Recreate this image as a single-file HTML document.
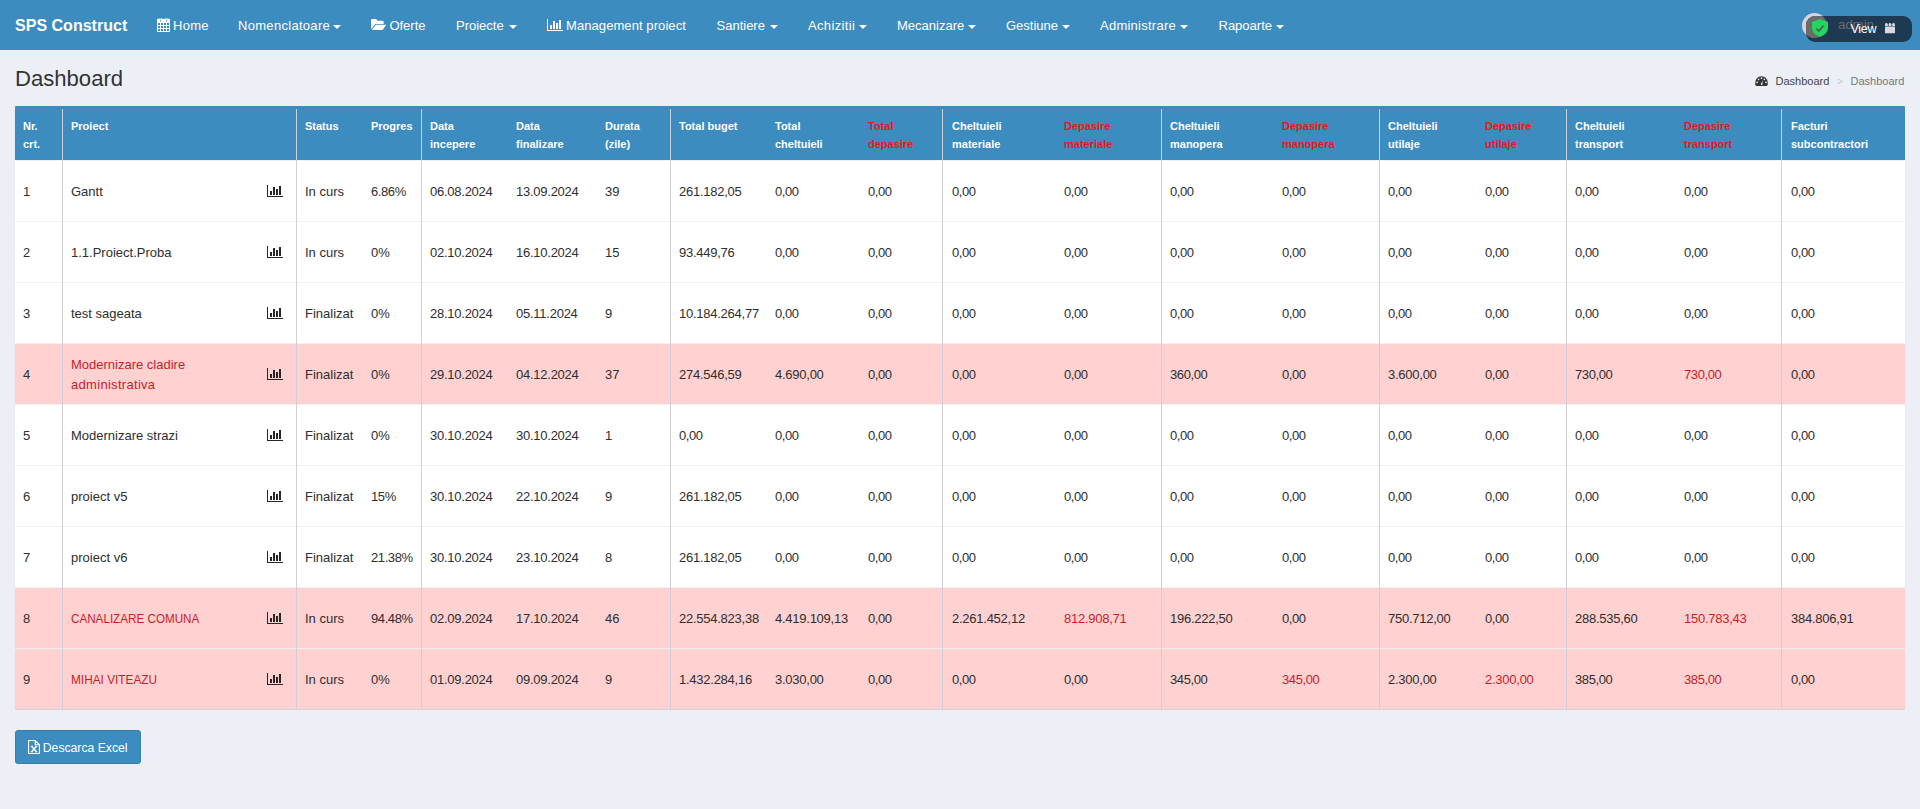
<!DOCTYPE html><html><head><meta charset="utf-8"><title>Dashboard</title><style>
html,body{margin:0;padding:0;}
body{width:1920px;height:809px;overflow:hidden;background:#ecf0f6;font-family:"Liberation Sans", sans-serif;position:relative;color:#2e2e2e;}
.t{position:absolute;white-space:nowrap;}
.ic{position:absolute;}
.nav{position:absolute;left:0;top:0;width:1920px;height:50px;background:#3d8cbf;}
.tbl{position:absolute;left:15px;top:106px;width:1890px;height:603px;background:#fff;border-radius:1px 1px 0 0;box-shadow:0 1px 1px rgba(0,0,0,0.12);overflow:hidden;}
.hd{position:absolute;left:0;top:0;width:1890px;height:54px;background:#3d8cbf;}
.vb{position:absolute;width:1px;background:#cfd0d4;}
.rb{position:absolute;left:0;width:1890px;height:1px;background:#f0f0f0;}
.pk{position:absolute;left:0;width:1890px;height:60px;background:#ffd1d1;}

</style></head><body>
<div class="nav"></div>
<div class="t" style="left:15px;top:15.44px;font-size:16.05px;line-height:20px;font-weight:700;color:#fff;">SPS Construct</div>
<div class="t" style="left:173px;top:15.50px;font-size:13px;line-height:20px;font-weight:400;color:#fff;letter-spacing:0.3px;">Home</div>
<div class="t" style="left:238px;top:15.50px;font-size:13px;line-height:20px;font-weight:400;color:#fff;letter-spacing:0.3px;">Nomenclatoare</div>
<div style="position:absolute;left:333px;top:25px;width:0;height:0;border-left:4px solid transparent;border-right:4px solid transparent;border-top:4px solid #fff;"></div>
<div class="t" style="left:389.4px;top:15.50px;font-size:13px;line-height:20px;font-weight:400;color:#fff;">Oferte</div>
<div class="t" style="left:456px;top:15.50px;font-size:13px;line-height:20px;font-weight:400;color:#fff;">Proiecte</div>
<div style="position:absolute;left:509px;top:25px;width:0;height:0;border-left:4px solid transparent;border-right:4px solid transparent;border-top:4px solid #fff;"></div>
<div class="t" style="left:566px;top:15.50px;font-size:13px;line-height:20px;font-weight:400;color:#fff;letter-spacing:0.08px;">Management proiect</div>
<div class="t" style="left:716.5px;top:15.50px;font-size:13px;line-height:20px;font-weight:400;color:#fff;">Santiere</div>
<div style="position:absolute;left:770px;top:25px;width:0;height:0;border-left:4px solid transparent;border-right:4px solid transparent;border-top:4px solid #fff;"></div>
<div class="t" style="left:808px;top:15.50px;font-size:13px;line-height:20px;font-weight:400;color:#fff;letter-spacing:0.35px;">Achizitii</div>
<div style="position:absolute;left:859px;top:25px;width:0;height:0;border-left:4px solid transparent;border-right:4px solid transparent;border-top:4px solid #fff;"></div>
<div class="t" style="left:897px;top:15.50px;font-size:13px;line-height:20px;font-weight:400;color:#fff;">Mecanizare</div>
<div style="position:absolute;left:968px;top:25px;width:0;height:0;border-left:4px solid transparent;border-right:4px solid transparent;border-top:4px solid #fff;"></div>
<div class="t" style="left:1006px;top:15.50px;font-size:13px;line-height:20px;font-weight:400;color:#fff;">Gestiune</div>
<div style="position:absolute;left:1062px;top:25px;width:0;height:0;border-left:4px solid transparent;border-right:4px solid transparent;border-top:4px solid #fff;"></div>
<div class="t" style="left:1100px;top:15.50px;font-size:13px;line-height:20px;font-weight:400;color:#fff;letter-spacing:0.25px;">Administrare</div>
<div style="position:absolute;left:1180px;top:25px;width:0;height:0;border-left:4px solid transparent;border-right:4px solid transparent;border-top:4px solid #fff;"></div>
<div class="t" style="left:1218.5px;top:15.50px;font-size:13px;line-height:20px;font-weight:400;color:#fff;">Rapoarte</div>
<div style="position:absolute;left:1276px;top:25px;width:0;height:0;border-left:4px solid transparent;border-right:4px solid transparent;border-top:4px solid #fff;"></div>
<svg class="ic" style="left:157px;top:18px" width="13" height="14" viewBox="0 0 13 14"><rect x="0" y="0.5" width="13" height="13.5" rx="0.6" fill="#fff"/><g fill="#3d8cbf" shape-rendering="crispEdges"><rect x="1" y="5" width="2" height="2"/><rect x="1" y="8" width="2" height="2"/><rect x="1" y="11" width="2" height="2"/><rect x="4" y="5" width="2" height="2"/><rect x="4" y="8" width="2" height="2"/><rect x="4" y="11" width="2" height="2"/><rect x="7" y="5" width="2" height="2"/><rect x="7" y="8" width="2" height="2"/><rect x="7" y="11" width="2" height="2"/><rect x="10" y="5" width="2" height="2"/><rect x="10" y="8" width="2" height="2"/><rect x="10" y="11" width="2" height="2"/></g><g fill="#3d8cbf" opacity="0.75"><rect x="3" y="1" width="0.9" height="2.8" rx="0.4"/><rect x="9.2" y="1" width="0.9" height="2.8" rx="0.4"/></g><g fill="#3d8cbf"><rect x="0" y="0" width="2.2" height="0.7"/><rect x="5" y="0" width="3" height="0.7"/><rect x="11" y="0" width="2" height="0.7"/></g></svg>
<svg class="ic" style="left:371px;top:19px" width="16" height="11" viewBox="0 0 16 11"><path fill="#fff" d="M0 1 Q0 0 1 0 H5.2 L6.4 1.7 H11.6 Q12.6 1.7 12.6 2.7 V4.9 H4.2 L0.3 10.2 Z M4.9 5.8 H15.3 L11.6 11 H0.9 Z"/></svg>
<svg class="ic" style="left:547px;top:19px" width="16" height="12" viewBox="0 0 16 12" shape-rendering="crispEdges"><g fill="#fff"><rect x="0" y="0" width="1" height="12"/><rect x="0" y="11" width="16" height="1"/><rect x="3" y="6" width="2" height="4"/><rect x="6" y="2" width="2" height="8"/><rect x="9" y="4" width="2" height="6"/><rect x="12" y="1" width="2" height="9"/></g></svg>
<div style="position:absolute;left:1802px;top:13px;width:25px;height:25px;border-radius:50%;background:#d6d6da;"></div>
<div style="position:absolute;left:1806px;top:16px;width:106px;height:26px;border-radius:9px;background:#1e3a52;overflow:hidden;"><div style="position:absolute;left:-4px;top:-3px;width:25px;height:25px;border-radius:50%;background:#6b6b6b;"></div></div>
<svg class="ic" style="left:1812px;top:19px" width="16" height="18" viewBox="0 0 16 18"><path fill="#22d65e" d="M8 0 L16 3 V9 Q16 15 8 18 Q0 15 0 9 V3 Z"/><path fill="none" stroke="#555" stroke-width="1.6" d="M4.2 9.5 L6.8 12 L11.5 6.5"/></svg>
<div class="t" style="left:1838px;top:15.32px;font-size:13.5px;line-height:20px;font-weight:400;color:#6a6a6a;letter-spacing:-0.2px;">admin</div>
<div class="t" style="left:1850.5px;top:18.63px;font-size:12.6px;line-height:20px;font-weight:400;color:#fff;letter-spacing:-0.35px;">View</div>
<svg class="ic" style="left:1885px;top:22px" width="10" height="12" viewBox="0 0 10 12"><g fill="#d8dce2"><rect x="0" y="4.6" width="10" height="6.6" rx="0.4"/><circle cx="1.4" cy="2.4" r="1.3"/><circle cx="5" cy="2.4" r="1.3"/><circle cx="8.6" cy="2.4" r="1.3"/><rect x="0.1" y="2.4" width="2.6" height="1.6"/><rect x="3.7" y="2.4" width="2.6" height="1.6"/><rect x="7.3" y="2.4" width="2.6" height="1.6"/></g></svg>
<div class="t" style="left:15px;top:63.94px;font-size:22.1px;line-height:30px;font-weight:400;color:#333;">Dashboard</div>
<svg class="ic" style="left:1755px;top:76px" width="13" height="10" viewBox="0 0 13 10"><path fill="#333" d="M0.3 6.4 A6.2 6.2 0 0 1 12.7 6.4 V8.6 Q12.7 10 11.3 10 H1.7 Q0.3 10 0.3 8.6 Z"/><g fill="#f4f4f8"><circle cx="6.5" cy="2.2" r="0.85"/><circle cx="3.6" cy="3.3" r="0.85"/><circle cx="9.4" cy="3.3" r="0.85"/><circle cx="2.1" cy="6.3" r="0.85"/><circle cx="10.9" cy="6.3" r="0.85"/><path d="M5.6 8.8 L7.6 4.2 L7.4 9 Z"/></g></svg>
<div class="t" style="left:1775.5px;top:71.19px;font-size:11px;line-height:20px;font-weight:400;color:#444;">Dashboard</div>
<div class="t" style="left:1837px;top:71.53px;font-size:10px;line-height:20px;font-weight:400;color:#c8c8c8;">&gt;</div>
<div class="t" style="left:1850.5px;top:71.19px;font-size:11px;line-height:20px;font-weight:400;color:#777;">Dashboard</div>
<div class="tbl">
<div class="hd"></div>
<div class="rb" style="top:54px"></div>
<div class="rb" style="top:115px"></div>
<div class="rb" style="top:176px"></div>
<div class="rb" style="top:237px"></div>
<div class="pk" style="top:238px"></div>
<div class="rb" style="top:298px"></div>
<div class="rb" style="top:359px"></div>
<div class="rb" style="top:420px"></div>
<div class="rb" style="top:481px"></div>
<div class="pk" style="top:482px"></div>
<div class="rb" style="top:542px"></div>
<div class="pk" style="top:543px"></div>
<div class="vb" style="left:47px;top:3px;height:600px"></div>
<div class="vb" style="left:281px;top:3px;height:600px"></div>
<div class="vb" style="left:406px;top:3px;height:600px"></div>
<div class="vb" style="left:655px;top:3px;height:600px"></div>
<div class="vb" style="left:927px;top:3px;height:600px"></div>
<div class="vb" style="left:1146px;top:3px;height:600px"></div>
<div class="vb" style="left:1364px;top:3px;height:600px"></div>
<div class="vb" style="left:1551px;top:3px;height:600px"></div>
<div class="vb" style="left:1766px;top:3px;height:600px"></div>
</div>
<div class="t" style="left:23px;top:117.19px;font-size:11px;line-height:18px;font-weight:700;color:#fff;">Nr.</div>
<div class="t" style="left:23px;top:135.19px;font-size:11px;line-height:18px;font-weight:700;color:#fff;">crt.</div>
<div class="t" style="left:71px;top:117.19px;font-size:11px;line-height:18px;font-weight:700;color:#fff;">Proiect</div>
<div class="t" style="left:305px;top:117.19px;font-size:11px;line-height:18px;font-weight:700;color:#fff;">Status</div>
<div class="t" style="left:371px;top:117.19px;font-size:11px;line-height:18px;font-weight:700;color:#fff;">Progres</div>
<div class="t" style="left:430px;top:117.19px;font-size:11px;line-height:18px;font-weight:700;color:#fff;">Data</div>
<div class="t" style="left:430px;top:135.19px;font-size:11px;line-height:18px;font-weight:700;color:#fff;">incepere</div>
<div class="t" style="left:516px;top:117.19px;font-size:11px;line-height:18px;font-weight:700;color:#fff;">Data</div>
<div class="t" style="left:516px;top:135.19px;font-size:11px;line-height:18px;font-weight:700;color:#fff;">finalizare</div>
<div class="t" style="left:605px;top:117.19px;font-size:11px;line-height:18px;font-weight:700;color:#fff;">Durata</div>
<div class="t" style="left:605px;top:135.19px;font-size:11px;line-height:18px;font-weight:700;color:#fff;">(zile)</div>
<div class="t" style="left:679px;top:117.19px;font-size:11px;line-height:18px;font-weight:700;color:#fff;">Total buget</div>
<div class="t" style="left:775px;top:117.19px;font-size:11px;line-height:18px;font-weight:700;color:#fff;">Total</div>
<div class="t" style="left:775px;top:135.19px;font-size:11px;line-height:18px;font-weight:700;color:#fff;">cheltuieli</div>
<div class="t" style="left:868px;top:117.19px;font-size:11px;line-height:18px;font-weight:700;color:#e8161c;">Total</div>
<div class="t" style="left:868px;top:135.19px;font-size:11px;line-height:18px;font-weight:700;color:#e8161c;">depasire</div>
<div class="t" style="left:952px;top:117.19px;font-size:11px;line-height:18px;font-weight:700;color:#fff;">Cheltuieli</div>
<div class="t" style="left:952px;top:135.19px;font-size:11px;line-height:18px;font-weight:700;color:#fff;">materiale</div>
<div class="t" style="left:1064px;top:117.19px;font-size:11px;line-height:18px;font-weight:700;color:#e8161c;">Depasire</div>
<div class="t" style="left:1064px;top:135.19px;font-size:11px;line-height:18px;font-weight:700;color:#e8161c;">materiale</div>
<div class="t" style="left:1170px;top:117.19px;font-size:11px;line-height:18px;font-weight:700;color:#fff;">Cheltuieli</div>
<div class="t" style="left:1170px;top:135.19px;font-size:11px;line-height:18px;font-weight:700;color:#fff;">manopera</div>
<div class="t" style="left:1282px;top:117.19px;font-size:11px;line-height:18px;font-weight:700;color:#e8161c;">Depasire</div>
<div class="t" style="left:1282px;top:135.19px;font-size:11px;line-height:18px;font-weight:700;color:#e8161c;">manopera</div>
<div class="t" style="left:1388px;top:117.19px;font-size:11px;line-height:18px;font-weight:700;color:#fff;">Cheltuieli</div>
<div class="t" style="left:1388px;top:135.19px;font-size:11px;line-height:18px;font-weight:700;color:#fff;">utilaje</div>
<div class="t" style="left:1485px;top:117.19px;font-size:11px;line-height:18px;font-weight:700;color:#e8161c;">Depasire</div>
<div class="t" style="left:1485px;top:135.19px;font-size:11px;line-height:18px;font-weight:700;color:#e8161c;">utilaje</div>
<div class="t" style="left:1575px;top:117.19px;font-size:11px;line-height:18px;font-weight:700;color:#fff;">Cheltuieli</div>
<div class="t" style="left:1575px;top:135.19px;font-size:11px;line-height:18px;font-weight:700;color:#fff;">transport</div>
<div class="t" style="left:1684px;top:117.19px;font-size:11px;line-height:18px;font-weight:700;color:#e8161c;">Depasire</div>
<div class="t" style="left:1684px;top:135.19px;font-size:11px;line-height:18px;font-weight:700;color:#e8161c;">transport</div>
<div class="t" style="left:1791px;top:117.19px;font-size:11px;line-height:18px;font-weight:700;color:#fff;">Facturi</div>
<div class="t" style="left:1791px;top:135.19px;font-size:11px;line-height:18px;font-weight:700;color:#fff;">subcontractori</div>
<div class="t" style="left:23px;top:181.50px;font-size:13px;line-height:20px;font-weight:400;color:#2e2e2e;">1</div>
<div class="t" style="left:71px;top:181.50px;font-size:13px;line-height:20px;font-weight:400;color:#2e2e2e;">Gantt</div>
<div class="t" style="left:305px;top:181.50px;font-size:13px;line-height:20px;font-weight:400;color:#2e2e2e;">In curs</div>
<div class="t" style="left:371px;top:181.50px;font-size:13px;line-height:20px;font-weight:400;color:#2e2e2e;letter-spacing:-0.4px;">6.86%</div>
<div class="t" style="left:430px;top:181.50px;font-size:13px;line-height:20px;font-weight:400;color:#2e2e2e;letter-spacing:-0.25px;">06.08.2024</div>
<div class="t" style="left:516px;top:181.50px;font-size:13px;line-height:20px;font-weight:400;color:#2e2e2e;letter-spacing:-0.25px;">13.09.2024</div>
<div class="t" style="left:605px;top:181.50px;font-size:13px;line-height:20px;font-weight:400;color:#2e2e2e;">39</div>
<div class="t" style="left:679px;top:181.50px;font-size:13px;line-height:20px;font-weight:400;color:#2e2e2e;letter-spacing:-0.25px;">261.182,05</div>
<div class="t" style="left:775px;top:181.50px;font-size:13px;line-height:20px;font-weight:400;color:#2e2e2e;letter-spacing:-0.4px;">0,00</div>
<div class="t" style="left:868px;top:181.50px;font-size:13px;line-height:20px;font-weight:400;color:#2e2e2e;letter-spacing:-0.4px;">0,00</div>
<div class="t" style="left:952px;top:181.50px;font-size:13px;line-height:20px;font-weight:400;color:#2e2e2e;letter-spacing:-0.4px;">0,00</div>
<div class="t" style="left:1064px;top:181.50px;font-size:13px;line-height:20px;font-weight:400;color:#2e2e2e;letter-spacing:-0.4px;">0,00</div>
<div class="t" style="left:1170px;top:181.50px;font-size:13px;line-height:20px;font-weight:400;color:#2e2e2e;letter-spacing:-0.4px;">0,00</div>
<div class="t" style="left:1282px;top:181.50px;font-size:13px;line-height:20px;font-weight:400;color:#2e2e2e;letter-spacing:-0.4px;">0,00</div>
<div class="t" style="left:1388px;top:181.50px;font-size:13px;line-height:20px;font-weight:400;color:#2e2e2e;letter-spacing:-0.4px;">0,00</div>
<div class="t" style="left:1485px;top:181.50px;font-size:13px;line-height:20px;font-weight:400;color:#2e2e2e;letter-spacing:-0.4px;">0,00</div>
<div class="t" style="left:1575px;top:181.50px;font-size:13px;line-height:20px;font-weight:400;color:#2e2e2e;letter-spacing:-0.4px;">0,00</div>
<div class="t" style="left:1684px;top:181.50px;font-size:13px;line-height:20px;font-weight:400;color:#2e2e2e;letter-spacing:-0.4px;">0,00</div>
<div class="t" style="left:1791px;top:181.50px;font-size:13px;line-height:20px;font-weight:400;color:#2e2e2e;letter-spacing:-0.4px;">0,00</div>
<svg class="ic" style="left:267px;top:185px" width="16" height="12" viewBox="0 0 16 12" shape-rendering="crispEdges"><g fill="#262626"><rect x="0" y="0" width="1" height="12"/><rect x="0" y="11" width="16" height="1"/><rect x="3" y="6" width="2" height="4"/><rect x="6" y="2" width="2" height="8"/><rect x="9" y="4" width="2" height="6"/><rect x="12" y="1" width="2" height="9"/></g></svg>
<div class="t" style="left:23px;top:242.50px;font-size:13px;line-height:20px;font-weight:400;color:#2e2e2e;">2</div>
<div class="t" style="left:71px;top:242.50px;font-size:13px;line-height:20px;font-weight:400;color:#2e2e2e;">1.1.Proiect.Proba</div>
<div class="t" style="left:305px;top:242.50px;font-size:13px;line-height:20px;font-weight:400;color:#2e2e2e;">In curs</div>
<div class="t" style="left:371px;top:242.50px;font-size:13px;line-height:20px;font-weight:400;color:#2e2e2e;">0%</div>
<div class="t" style="left:430px;top:242.50px;font-size:13px;line-height:20px;font-weight:400;color:#2e2e2e;letter-spacing:-0.25px;">02.10.2024</div>
<div class="t" style="left:516px;top:242.50px;font-size:13px;line-height:20px;font-weight:400;color:#2e2e2e;letter-spacing:-0.25px;">16.10.2024</div>
<div class="t" style="left:605px;top:242.50px;font-size:13px;line-height:20px;font-weight:400;color:#2e2e2e;">15</div>
<div class="t" style="left:679px;top:242.50px;font-size:13px;line-height:20px;font-weight:400;color:#2e2e2e;letter-spacing:-0.25px;">93.449,76</div>
<div class="t" style="left:775px;top:242.50px;font-size:13px;line-height:20px;font-weight:400;color:#2e2e2e;letter-spacing:-0.4px;">0,00</div>
<div class="t" style="left:868px;top:242.50px;font-size:13px;line-height:20px;font-weight:400;color:#2e2e2e;letter-spacing:-0.4px;">0,00</div>
<div class="t" style="left:952px;top:242.50px;font-size:13px;line-height:20px;font-weight:400;color:#2e2e2e;letter-spacing:-0.4px;">0,00</div>
<div class="t" style="left:1064px;top:242.50px;font-size:13px;line-height:20px;font-weight:400;color:#2e2e2e;letter-spacing:-0.4px;">0,00</div>
<div class="t" style="left:1170px;top:242.50px;font-size:13px;line-height:20px;font-weight:400;color:#2e2e2e;letter-spacing:-0.4px;">0,00</div>
<div class="t" style="left:1282px;top:242.50px;font-size:13px;line-height:20px;font-weight:400;color:#2e2e2e;letter-spacing:-0.4px;">0,00</div>
<div class="t" style="left:1388px;top:242.50px;font-size:13px;line-height:20px;font-weight:400;color:#2e2e2e;letter-spacing:-0.4px;">0,00</div>
<div class="t" style="left:1485px;top:242.50px;font-size:13px;line-height:20px;font-weight:400;color:#2e2e2e;letter-spacing:-0.4px;">0,00</div>
<div class="t" style="left:1575px;top:242.50px;font-size:13px;line-height:20px;font-weight:400;color:#2e2e2e;letter-spacing:-0.4px;">0,00</div>
<div class="t" style="left:1684px;top:242.50px;font-size:13px;line-height:20px;font-weight:400;color:#2e2e2e;letter-spacing:-0.4px;">0,00</div>
<div class="t" style="left:1791px;top:242.50px;font-size:13px;line-height:20px;font-weight:400;color:#2e2e2e;letter-spacing:-0.4px;">0,00</div>
<svg class="ic" style="left:267px;top:246px" width="16" height="12" viewBox="0 0 16 12" shape-rendering="crispEdges"><g fill="#262626"><rect x="0" y="0" width="1" height="12"/><rect x="0" y="11" width="16" height="1"/><rect x="3" y="6" width="2" height="4"/><rect x="6" y="2" width="2" height="8"/><rect x="9" y="4" width="2" height="6"/><rect x="12" y="1" width="2" height="9"/></g></svg>
<div class="t" style="left:23px;top:303.50px;font-size:13px;line-height:20px;font-weight:400;color:#2e2e2e;">3</div>
<div class="t" style="left:71px;top:303.50px;font-size:13px;line-height:20px;font-weight:400;color:#2e2e2e;">test sageata</div>
<div class="t" style="left:305px;top:303.50px;font-size:13px;line-height:20px;font-weight:400;color:#2e2e2e;">Finalizat</div>
<div class="t" style="left:371px;top:303.50px;font-size:13px;line-height:20px;font-weight:400;color:#2e2e2e;">0%</div>
<div class="t" style="left:430px;top:303.50px;font-size:13px;line-height:20px;font-weight:400;color:#2e2e2e;letter-spacing:-0.25px;">28.10.2024</div>
<div class="t" style="left:516px;top:303.50px;font-size:13px;line-height:20px;font-weight:400;color:#2e2e2e;letter-spacing:-0.25px;">05.11.2024</div>
<div class="t" style="left:605px;top:303.50px;font-size:13px;line-height:20px;font-weight:400;color:#2e2e2e;">9</div>
<div class="t" style="left:679px;top:303.50px;font-size:13px;line-height:20px;font-weight:400;color:#2e2e2e;letter-spacing:-0.25px;">10.184.264,77</div>
<div class="t" style="left:775px;top:303.50px;font-size:13px;line-height:20px;font-weight:400;color:#2e2e2e;letter-spacing:-0.4px;">0,00</div>
<div class="t" style="left:868px;top:303.50px;font-size:13px;line-height:20px;font-weight:400;color:#2e2e2e;letter-spacing:-0.4px;">0,00</div>
<div class="t" style="left:952px;top:303.50px;font-size:13px;line-height:20px;font-weight:400;color:#2e2e2e;letter-spacing:-0.4px;">0,00</div>
<div class="t" style="left:1064px;top:303.50px;font-size:13px;line-height:20px;font-weight:400;color:#2e2e2e;letter-spacing:-0.4px;">0,00</div>
<div class="t" style="left:1170px;top:303.50px;font-size:13px;line-height:20px;font-weight:400;color:#2e2e2e;letter-spacing:-0.4px;">0,00</div>
<div class="t" style="left:1282px;top:303.50px;font-size:13px;line-height:20px;font-weight:400;color:#2e2e2e;letter-spacing:-0.4px;">0,00</div>
<div class="t" style="left:1388px;top:303.50px;font-size:13px;line-height:20px;font-weight:400;color:#2e2e2e;letter-spacing:-0.4px;">0,00</div>
<div class="t" style="left:1485px;top:303.50px;font-size:13px;line-height:20px;font-weight:400;color:#2e2e2e;letter-spacing:-0.4px;">0,00</div>
<div class="t" style="left:1575px;top:303.50px;font-size:13px;line-height:20px;font-weight:400;color:#2e2e2e;letter-spacing:-0.4px;">0,00</div>
<div class="t" style="left:1684px;top:303.50px;font-size:13px;line-height:20px;font-weight:400;color:#2e2e2e;letter-spacing:-0.4px;">0,00</div>
<div class="t" style="left:1791px;top:303.50px;font-size:13px;line-height:20px;font-weight:400;color:#2e2e2e;letter-spacing:-0.4px;">0,00</div>
<svg class="ic" style="left:267px;top:307px" width="16" height="12" viewBox="0 0 16 12" shape-rendering="crispEdges"><g fill="#262626"><rect x="0" y="0" width="1" height="12"/><rect x="0" y="11" width="16" height="1"/><rect x="3" y="6" width="2" height="4"/><rect x="6" y="2" width="2" height="8"/><rect x="9" y="4" width="2" height="6"/><rect x="12" y="1" width="2" height="9"/></g></svg>
<div class="t" style="left:23px;top:364.50px;font-size:13px;line-height:20px;font-weight:400;color:#2e2e2e;">4</div>
<div class="t" style="left:71px;top:354.50px;font-size:13px;line-height:20px;font-weight:400;color:#ca1d28;">Modernizare cladire</div>
<div class="t" style="left:71px;top:374.50px;font-size:13px;line-height:20px;font-weight:400;color:#ca1d28;letter-spacing:0.3px;">administrativa</div>
<div class="t" style="left:305px;top:364.50px;font-size:13px;line-height:20px;font-weight:400;color:#2e2e2e;">Finalizat</div>
<div class="t" style="left:371px;top:364.50px;font-size:13px;line-height:20px;font-weight:400;color:#2e2e2e;">0%</div>
<div class="t" style="left:430px;top:364.50px;font-size:13px;line-height:20px;font-weight:400;color:#2e2e2e;letter-spacing:-0.25px;">29.10.2024</div>
<div class="t" style="left:516px;top:364.50px;font-size:13px;line-height:20px;font-weight:400;color:#2e2e2e;letter-spacing:-0.25px;">04.12.2024</div>
<div class="t" style="left:605px;top:364.50px;font-size:13px;line-height:20px;font-weight:400;color:#2e2e2e;">37</div>
<div class="t" style="left:679px;top:364.50px;font-size:13px;line-height:20px;font-weight:400;color:#2e2e2e;letter-spacing:-0.25px;">274.546,59</div>
<div class="t" style="left:775px;top:364.50px;font-size:13px;line-height:20px;font-weight:400;color:#2e2e2e;letter-spacing:-0.25px;">4.690,00</div>
<div class="t" style="left:868px;top:364.50px;font-size:13px;line-height:20px;font-weight:400;color:#2e2e2e;letter-spacing:-0.4px;">0,00</div>
<div class="t" style="left:952px;top:364.50px;font-size:13px;line-height:20px;font-weight:400;color:#2e2e2e;letter-spacing:-0.4px;">0,00</div>
<div class="t" style="left:1064px;top:364.50px;font-size:13px;line-height:20px;font-weight:400;color:#2e2e2e;letter-spacing:-0.4px;">0,00</div>
<div class="t" style="left:1170px;top:364.50px;font-size:13px;line-height:20px;font-weight:400;color:#2e2e2e;letter-spacing:-0.4px;">360,00</div>
<div class="t" style="left:1282px;top:364.50px;font-size:13px;line-height:20px;font-weight:400;color:#2e2e2e;letter-spacing:-0.4px;">0,00</div>
<div class="t" style="left:1388px;top:364.50px;font-size:13px;line-height:20px;font-weight:400;color:#2e2e2e;letter-spacing:-0.25px;">3.600,00</div>
<div class="t" style="left:1485px;top:364.50px;font-size:13px;line-height:20px;font-weight:400;color:#2e2e2e;letter-spacing:-0.4px;">0,00</div>
<div class="t" style="left:1575px;top:364.50px;font-size:13px;line-height:20px;font-weight:400;color:#2e2e2e;letter-spacing:-0.4px;">730,00</div>
<div class="t" style="left:1684px;top:364.50px;font-size:13px;line-height:20px;font-weight:400;color:#ca1d28;letter-spacing:-0.4px;">730,00</div>
<div class="t" style="left:1791px;top:364.50px;font-size:13px;line-height:20px;font-weight:400;color:#2e2e2e;letter-spacing:-0.4px;">0,00</div>
<svg class="ic" style="left:267px;top:368px" width="16" height="12" viewBox="0 0 16 12" shape-rendering="crispEdges"><g fill="#262626"><rect x="0" y="0" width="1" height="12"/><rect x="0" y="11" width="16" height="1"/><rect x="3" y="6" width="2" height="4"/><rect x="6" y="2" width="2" height="8"/><rect x="9" y="4" width="2" height="6"/><rect x="12" y="1" width="2" height="9"/></g></svg>
<div class="t" style="left:23px;top:425.50px;font-size:13px;line-height:20px;font-weight:400;color:#2e2e2e;">5</div>
<div class="t" style="left:71px;top:425.50px;font-size:13px;line-height:20px;font-weight:400;color:#2e2e2e;">Modernizare strazi</div>
<div class="t" style="left:305px;top:425.50px;font-size:13px;line-height:20px;font-weight:400;color:#2e2e2e;">Finalizat</div>
<div class="t" style="left:371px;top:425.50px;font-size:13px;line-height:20px;font-weight:400;color:#2e2e2e;">0%</div>
<div class="t" style="left:430px;top:425.50px;font-size:13px;line-height:20px;font-weight:400;color:#2e2e2e;letter-spacing:-0.25px;">30.10.2024</div>
<div class="t" style="left:516px;top:425.50px;font-size:13px;line-height:20px;font-weight:400;color:#2e2e2e;letter-spacing:-0.25px;">30.10.2024</div>
<div class="t" style="left:605px;top:425.50px;font-size:13px;line-height:20px;font-weight:400;color:#2e2e2e;">1</div>
<div class="t" style="left:679px;top:425.50px;font-size:13px;line-height:20px;font-weight:400;color:#2e2e2e;letter-spacing:-0.4px;">0,00</div>
<div class="t" style="left:775px;top:425.50px;font-size:13px;line-height:20px;font-weight:400;color:#2e2e2e;letter-spacing:-0.4px;">0,00</div>
<div class="t" style="left:868px;top:425.50px;font-size:13px;line-height:20px;font-weight:400;color:#2e2e2e;letter-spacing:-0.4px;">0,00</div>
<div class="t" style="left:952px;top:425.50px;font-size:13px;line-height:20px;font-weight:400;color:#2e2e2e;letter-spacing:-0.4px;">0,00</div>
<div class="t" style="left:1064px;top:425.50px;font-size:13px;line-height:20px;font-weight:400;color:#2e2e2e;letter-spacing:-0.4px;">0,00</div>
<div class="t" style="left:1170px;top:425.50px;font-size:13px;line-height:20px;font-weight:400;color:#2e2e2e;letter-spacing:-0.4px;">0,00</div>
<div class="t" style="left:1282px;top:425.50px;font-size:13px;line-height:20px;font-weight:400;color:#2e2e2e;letter-spacing:-0.4px;">0,00</div>
<div class="t" style="left:1388px;top:425.50px;font-size:13px;line-height:20px;font-weight:400;color:#2e2e2e;letter-spacing:-0.4px;">0,00</div>
<div class="t" style="left:1485px;top:425.50px;font-size:13px;line-height:20px;font-weight:400;color:#2e2e2e;letter-spacing:-0.4px;">0,00</div>
<div class="t" style="left:1575px;top:425.50px;font-size:13px;line-height:20px;font-weight:400;color:#2e2e2e;letter-spacing:-0.4px;">0,00</div>
<div class="t" style="left:1684px;top:425.50px;font-size:13px;line-height:20px;font-weight:400;color:#2e2e2e;letter-spacing:-0.4px;">0,00</div>
<div class="t" style="left:1791px;top:425.50px;font-size:13px;line-height:20px;font-weight:400;color:#2e2e2e;letter-spacing:-0.4px;">0,00</div>
<svg class="ic" style="left:267px;top:429px" width="16" height="12" viewBox="0 0 16 12" shape-rendering="crispEdges"><g fill="#262626"><rect x="0" y="0" width="1" height="12"/><rect x="0" y="11" width="16" height="1"/><rect x="3" y="6" width="2" height="4"/><rect x="6" y="2" width="2" height="8"/><rect x="9" y="4" width="2" height="6"/><rect x="12" y="1" width="2" height="9"/></g></svg>
<div class="t" style="left:23px;top:486.50px;font-size:13px;line-height:20px;font-weight:400;color:#2e2e2e;">6</div>
<div class="t" style="left:71px;top:486.50px;font-size:13px;line-height:20px;font-weight:400;color:#2e2e2e;">proiect v5</div>
<div class="t" style="left:305px;top:486.50px;font-size:13px;line-height:20px;font-weight:400;color:#2e2e2e;">Finalizat</div>
<div class="t" style="left:371px;top:486.50px;font-size:13px;line-height:20px;font-weight:400;color:#2e2e2e;letter-spacing:-0.4px;">15%</div>
<div class="t" style="left:430px;top:486.50px;font-size:13px;line-height:20px;font-weight:400;color:#2e2e2e;letter-spacing:-0.25px;">30.10.2024</div>
<div class="t" style="left:516px;top:486.50px;font-size:13px;line-height:20px;font-weight:400;color:#2e2e2e;letter-spacing:-0.25px;">22.10.2024</div>
<div class="t" style="left:605px;top:486.50px;font-size:13px;line-height:20px;font-weight:400;color:#2e2e2e;">9</div>
<div class="t" style="left:679px;top:486.50px;font-size:13px;line-height:20px;font-weight:400;color:#2e2e2e;letter-spacing:-0.25px;">261.182,05</div>
<div class="t" style="left:775px;top:486.50px;font-size:13px;line-height:20px;font-weight:400;color:#2e2e2e;letter-spacing:-0.4px;">0,00</div>
<div class="t" style="left:868px;top:486.50px;font-size:13px;line-height:20px;font-weight:400;color:#2e2e2e;letter-spacing:-0.4px;">0,00</div>
<div class="t" style="left:952px;top:486.50px;font-size:13px;line-height:20px;font-weight:400;color:#2e2e2e;letter-spacing:-0.4px;">0,00</div>
<div class="t" style="left:1064px;top:486.50px;font-size:13px;line-height:20px;font-weight:400;color:#2e2e2e;letter-spacing:-0.4px;">0,00</div>
<div class="t" style="left:1170px;top:486.50px;font-size:13px;line-height:20px;font-weight:400;color:#2e2e2e;letter-spacing:-0.4px;">0,00</div>
<div class="t" style="left:1282px;top:486.50px;font-size:13px;line-height:20px;font-weight:400;color:#2e2e2e;letter-spacing:-0.4px;">0,00</div>
<div class="t" style="left:1388px;top:486.50px;font-size:13px;line-height:20px;font-weight:400;color:#2e2e2e;letter-spacing:-0.4px;">0,00</div>
<div class="t" style="left:1485px;top:486.50px;font-size:13px;line-height:20px;font-weight:400;color:#2e2e2e;letter-spacing:-0.4px;">0,00</div>
<div class="t" style="left:1575px;top:486.50px;font-size:13px;line-height:20px;font-weight:400;color:#2e2e2e;letter-spacing:-0.4px;">0,00</div>
<div class="t" style="left:1684px;top:486.50px;font-size:13px;line-height:20px;font-weight:400;color:#2e2e2e;letter-spacing:-0.4px;">0,00</div>
<div class="t" style="left:1791px;top:486.50px;font-size:13px;line-height:20px;font-weight:400;color:#2e2e2e;letter-spacing:-0.4px;">0,00</div>
<svg class="ic" style="left:267px;top:490px" width="16" height="12" viewBox="0 0 16 12" shape-rendering="crispEdges"><g fill="#262626"><rect x="0" y="0" width="1" height="12"/><rect x="0" y="11" width="16" height="1"/><rect x="3" y="6" width="2" height="4"/><rect x="6" y="2" width="2" height="8"/><rect x="9" y="4" width="2" height="6"/><rect x="12" y="1" width="2" height="9"/></g></svg>
<div class="t" style="left:23px;top:547.50px;font-size:13px;line-height:20px;font-weight:400;color:#2e2e2e;">7</div>
<div class="t" style="left:71px;top:547.50px;font-size:13px;line-height:20px;font-weight:400;color:#2e2e2e;">proiect v6</div>
<div class="t" style="left:305px;top:547.50px;font-size:13px;line-height:20px;font-weight:400;color:#2e2e2e;">Finalizat</div>
<div class="t" style="left:371px;top:547.50px;font-size:13px;line-height:20px;font-weight:400;color:#2e2e2e;letter-spacing:-0.4px;">21.38%</div>
<div class="t" style="left:430px;top:547.50px;font-size:13px;line-height:20px;font-weight:400;color:#2e2e2e;letter-spacing:-0.25px;">30.10.2024</div>
<div class="t" style="left:516px;top:547.50px;font-size:13px;line-height:20px;font-weight:400;color:#2e2e2e;letter-spacing:-0.25px;">23.10.2024</div>
<div class="t" style="left:605px;top:547.50px;font-size:13px;line-height:20px;font-weight:400;color:#2e2e2e;">8</div>
<div class="t" style="left:679px;top:547.50px;font-size:13px;line-height:20px;font-weight:400;color:#2e2e2e;letter-spacing:-0.25px;">261.182,05</div>
<div class="t" style="left:775px;top:547.50px;font-size:13px;line-height:20px;font-weight:400;color:#2e2e2e;letter-spacing:-0.4px;">0,00</div>
<div class="t" style="left:868px;top:547.50px;font-size:13px;line-height:20px;font-weight:400;color:#2e2e2e;letter-spacing:-0.4px;">0,00</div>
<div class="t" style="left:952px;top:547.50px;font-size:13px;line-height:20px;font-weight:400;color:#2e2e2e;letter-spacing:-0.4px;">0,00</div>
<div class="t" style="left:1064px;top:547.50px;font-size:13px;line-height:20px;font-weight:400;color:#2e2e2e;letter-spacing:-0.4px;">0,00</div>
<div class="t" style="left:1170px;top:547.50px;font-size:13px;line-height:20px;font-weight:400;color:#2e2e2e;letter-spacing:-0.4px;">0,00</div>
<div class="t" style="left:1282px;top:547.50px;font-size:13px;line-height:20px;font-weight:400;color:#2e2e2e;letter-spacing:-0.4px;">0,00</div>
<div class="t" style="left:1388px;top:547.50px;font-size:13px;line-height:20px;font-weight:400;color:#2e2e2e;letter-spacing:-0.4px;">0,00</div>
<div class="t" style="left:1485px;top:547.50px;font-size:13px;line-height:20px;font-weight:400;color:#2e2e2e;letter-spacing:-0.4px;">0,00</div>
<div class="t" style="left:1575px;top:547.50px;font-size:13px;line-height:20px;font-weight:400;color:#2e2e2e;letter-spacing:-0.4px;">0,00</div>
<div class="t" style="left:1684px;top:547.50px;font-size:13px;line-height:20px;font-weight:400;color:#2e2e2e;letter-spacing:-0.4px;">0,00</div>
<div class="t" style="left:1791px;top:547.50px;font-size:13px;line-height:20px;font-weight:400;color:#2e2e2e;letter-spacing:-0.4px;">0,00</div>
<svg class="ic" style="left:267px;top:551px" width="16" height="12" viewBox="0 0 16 12" shape-rendering="crispEdges"><g fill="#262626"><rect x="0" y="0" width="1" height="12"/><rect x="0" y="11" width="16" height="1"/><rect x="3" y="6" width="2" height="4"/><rect x="6" y="2" width="2" height="8"/><rect x="9" y="4" width="2" height="6"/><rect x="12" y="1" width="2" height="9"/></g></svg>
<div class="t" style="left:23px;top:608.50px;font-size:13px;line-height:20px;font-weight:400;color:#2e2e2e;">8</div>
<div class="t" style="left:71px;top:608.50px;font-size:13px;line-height:20px;font-weight:400;color:#ca1d28;transform:scaleX(0.897);transform-origin:0 0;">CANALIZARE COMUNA</div>
<div class="t" style="left:305px;top:608.50px;font-size:13px;line-height:20px;font-weight:400;color:#2e2e2e;">In curs</div>
<div class="t" style="left:371px;top:608.50px;font-size:13px;line-height:20px;font-weight:400;color:#2e2e2e;letter-spacing:-0.4px;">94.48%</div>
<div class="t" style="left:430px;top:608.50px;font-size:13px;line-height:20px;font-weight:400;color:#2e2e2e;letter-spacing:-0.25px;">02.09.2024</div>
<div class="t" style="left:516px;top:608.50px;font-size:13px;line-height:20px;font-weight:400;color:#2e2e2e;letter-spacing:-0.25px;">17.10.2024</div>
<div class="t" style="left:605px;top:608.50px;font-size:13px;line-height:20px;font-weight:400;color:#2e2e2e;">46</div>
<div class="t" style="left:679px;top:608.50px;font-size:13px;line-height:20px;font-weight:400;color:#2e2e2e;letter-spacing:-0.25px;">22.554.823,38</div>
<div class="t" style="left:775px;top:608.50px;font-size:13px;line-height:20px;font-weight:400;color:#2e2e2e;letter-spacing:-0.25px;">4.419.109,13</div>
<div class="t" style="left:868px;top:608.50px;font-size:13px;line-height:20px;font-weight:400;color:#2e2e2e;letter-spacing:-0.4px;">0,00</div>
<div class="t" style="left:952px;top:608.50px;font-size:13px;line-height:20px;font-weight:400;color:#2e2e2e;letter-spacing:-0.25px;">2.261.452,12</div>
<div class="t" style="left:1064px;top:608.50px;font-size:13px;line-height:20px;font-weight:400;color:#ca1d28;letter-spacing:-0.25px;">812.908,71</div>
<div class="t" style="left:1170px;top:608.50px;font-size:13px;line-height:20px;font-weight:400;color:#2e2e2e;letter-spacing:-0.25px;">196.222,50</div>
<div class="t" style="left:1282px;top:608.50px;font-size:13px;line-height:20px;font-weight:400;color:#2e2e2e;letter-spacing:-0.4px;">0,00</div>
<div class="t" style="left:1388px;top:608.50px;font-size:13px;line-height:20px;font-weight:400;color:#2e2e2e;letter-spacing:-0.25px;">750.712,00</div>
<div class="t" style="left:1485px;top:608.50px;font-size:13px;line-height:20px;font-weight:400;color:#2e2e2e;letter-spacing:-0.4px;">0,00</div>
<div class="t" style="left:1575px;top:608.50px;font-size:13px;line-height:20px;font-weight:400;color:#2e2e2e;letter-spacing:-0.25px;">288.535,60</div>
<div class="t" style="left:1684px;top:608.50px;font-size:13px;line-height:20px;font-weight:400;color:#ca1d28;letter-spacing:-0.25px;">150.783,43</div>
<div class="t" style="left:1791px;top:608.50px;font-size:13px;line-height:20px;font-weight:400;color:#2e2e2e;letter-spacing:-0.25px;">384.806,91</div>
<svg class="ic" style="left:267px;top:612px" width="16" height="12" viewBox="0 0 16 12" shape-rendering="crispEdges"><g fill="#262626"><rect x="0" y="0" width="1" height="12"/><rect x="0" y="11" width="16" height="1"/><rect x="3" y="6" width="2" height="4"/><rect x="6" y="2" width="2" height="8"/><rect x="9" y="4" width="2" height="6"/><rect x="12" y="1" width="2" height="9"/></g></svg>
<div class="t" style="left:23px;top:669.50px;font-size:13px;line-height:20px;font-weight:400;color:#2e2e2e;">9</div>
<div class="t" style="left:71px;top:669.50px;font-size:13px;line-height:20px;font-weight:400;color:#ca1d28;transform:scaleX(0.91);transform-origin:0 0;">MIHAI VITEAZU</div>
<div class="t" style="left:305px;top:669.50px;font-size:13px;line-height:20px;font-weight:400;color:#2e2e2e;">In curs</div>
<div class="t" style="left:371px;top:669.50px;font-size:13px;line-height:20px;font-weight:400;color:#2e2e2e;">0%</div>
<div class="t" style="left:430px;top:669.50px;font-size:13px;line-height:20px;font-weight:400;color:#2e2e2e;letter-spacing:-0.25px;">01.09.2024</div>
<div class="t" style="left:516px;top:669.50px;font-size:13px;line-height:20px;font-weight:400;color:#2e2e2e;letter-spacing:-0.25px;">09.09.2024</div>
<div class="t" style="left:605px;top:669.50px;font-size:13px;line-height:20px;font-weight:400;color:#2e2e2e;">9</div>
<div class="t" style="left:679px;top:669.50px;font-size:13px;line-height:20px;font-weight:400;color:#2e2e2e;letter-spacing:-0.25px;">1.432.284,16</div>
<div class="t" style="left:775px;top:669.50px;font-size:13px;line-height:20px;font-weight:400;color:#2e2e2e;letter-spacing:-0.25px;">3.030,00</div>
<div class="t" style="left:868px;top:669.50px;font-size:13px;line-height:20px;font-weight:400;color:#2e2e2e;letter-spacing:-0.4px;">0,00</div>
<div class="t" style="left:952px;top:669.50px;font-size:13px;line-height:20px;font-weight:400;color:#2e2e2e;letter-spacing:-0.4px;">0,00</div>
<div class="t" style="left:1064px;top:669.50px;font-size:13px;line-height:20px;font-weight:400;color:#2e2e2e;letter-spacing:-0.4px;">0,00</div>
<div class="t" style="left:1170px;top:669.50px;font-size:13px;line-height:20px;font-weight:400;color:#2e2e2e;letter-spacing:-0.4px;">345,00</div>
<div class="t" style="left:1282px;top:669.50px;font-size:13px;line-height:20px;font-weight:400;color:#ca1d28;letter-spacing:-0.4px;">345,00</div>
<div class="t" style="left:1388px;top:669.50px;font-size:13px;line-height:20px;font-weight:400;color:#2e2e2e;letter-spacing:-0.25px;">2.300,00</div>
<div class="t" style="left:1485px;top:669.50px;font-size:13px;line-height:20px;font-weight:400;color:#ca1d28;letter-spacing:-0.25px;">2.300,00</div>
<div class="t" style="left:1575px;top:669.50px;font-size:13px;line-height:20px;font-weight:400;color:#2e2e2e;letter-spacing:-0.4px;">385,00</div>
<div class="t" style="left:1684px;top:669.50px;font-size:13px;line-height:20px;font-weight:400;color:#ca1d28;letter-spacing:-0.4px;">385,00</div>
<div class="t" style="left:1791px;top:669.50px;font-size:13px;line-height:20px;font-weight:400;color:#2e2e2e;letter-spacing:-0.4px;">0,00</div>
<svg class="ic" style="left:267px;top:673px" width="16" height="12" viewBox="0 0 16 12" shape-rendering="crispEdges"><g fill="#262626"><rect x="0" y="0" width="1" height="12"/><rect x="0" y="11" width="16" height="1"/><rect x="3" y="6" width="2" height="4"/><rect x="6" y="2" width="2" height="8"/><rect x="9" y="4" width="2" height="6"/><rect x="12" y="1" width="2" height="9"/></g></svg>
<div style="position:absolute;left:15px;top:730px;width:124px;height:32px;background:#3d8cbf;border:1px solid #367fa9;border-radius:3px;"></div>
<svg class="ic" style="left:28px;top:740px" width="12" height="14" viewBox="0 0 12 14"><path fill="none" stroke="#fff" stroke-width="1.1" d="M0.55 0.55 H7.2 L11.45 4.8 V13.45 H0.55 Z M7.2 0.55 V4.8 H11.45"/><path fill="none" stroke="#fff" stroke-width="1.5" d="M3.6 6.3 L8.4 11.8 M8.4 6.3 L3.6 11.8"/><path fill="none" stroke="#fff" stroke-width="0.9" d="M2.6 6.3 H5 M7 6.3 H9.4 M2.6 11.8 H5 M7 11.8 H9.4"/></svg>
<div class="t" style="left:42.8px;top:737.77px;font-size:12.2px;line-height:20px;font-weight:400;color:#fff;">Descarca Excel</div>
</body></html>
